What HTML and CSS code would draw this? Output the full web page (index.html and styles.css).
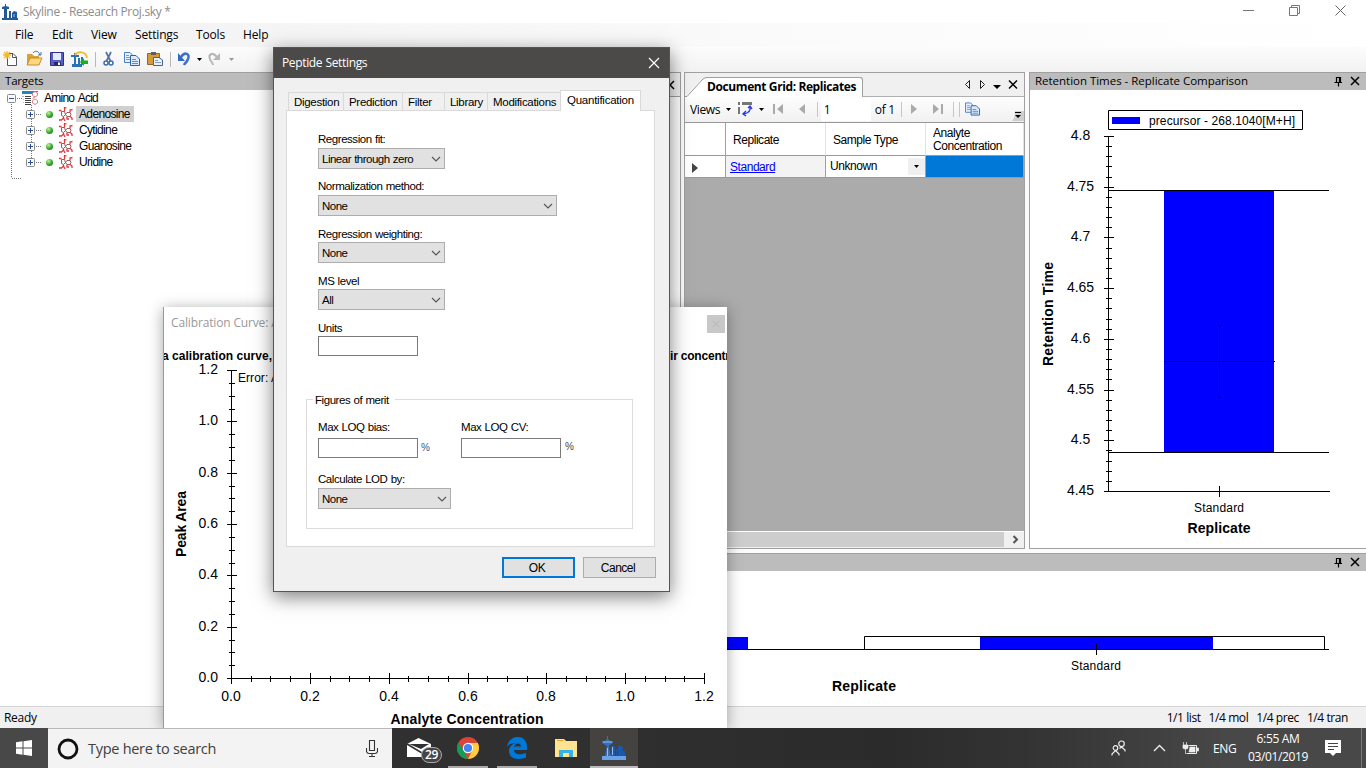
FILE: index.html
```
<!DOCTYPE html>
<html lang="en">
<head>
    <meta charset="UTF-8">
    <meta name="viewport" content="width=device-width, initial-scale=1.0">
    <title>Skyline - Research Proj.sky</title>
    <link rel="stylesheet" href="styles.css">
</head>
<body>
    <!-- shared icons -->
    <svg class="sprite" width="0" height="0">
        <symbol id="pin" viewBox="0 0 9 11"><path d="M2.5 6V1.5H6.5V6M5.5 1.5V6M0.5 6.5H8M4.5 7V10.5" fill="none" stroke="#000" stroke-width="1.2"/></symbol>
        <symbol id="close" viewBox="0 0 10 10"><path d="M1 1L9 9M9 1L1 9" fill="none" stroke="currentColor" stroke-width="1.5"/></symbol>
        <symbol id="chevron" viewBox="0 0 10 6"><path d="M1 1L5 5L9 1" fill="none" stroke="#555" stroke-width="1.1"/></symbol>
        <symbol id="plus" viewBox="0 0 9 9"><rect x=".5" y=".5" width="8" height="8" rx="1" fill="#fafafa" stroke="#8a8a8a"/><path d="M2 4.500H7M4.500 2V7" stroke="#2c4da0"/></symbol>
        <symbol id="copy" viewBox="0 0 16 14">
            <path d="M.5 .5H6L8.5 3V10.500H.5Z" fill="#eaf2fd" stroke="#4a7fc5"/>
            <path d="M2 3.500H5M2 5.500H6M2 7.500H6" stroke="#6a9bd8"/>
            <path d="M6.500 3.500H12L15.500 7V13.500H6.500Z" fill="#dceafb" stroke="#2d62ad"/>
            <path d="M8 7.500H12M8 9.500H14M8 11.500H14" stroke="#5b8fd4"/>
        </symbol>
        <symbol id="molecule" viewBox="0 0 14 15">
            <path d="M2.500 4.500H5.500L6.500 7.500L4.500 9.500L2.500 8.500ZM6.500 7.500L8 5.500H11L12 7.500L11 9.500H8Z" fill="none" stroke="#8a4b4d" stroke-width=".9"/>
            <path d="M0 3.500H2.500M5.500 4.500V0M5 .8H7.500M11 5.500V3L13.500 2.500M11 9.500L13 11V13M8 9.500V12H10M4.500 9.500V11L2.500 13H0M4.500 11L6 14" fill="none" stroke="#e2383d" stroke-width="1.300"/>
        </symbol>
        <symbol id="city" viewBox="0 0 26 26">
            <path d="M1 21H4L6 19L10 21H25V25H1Z" fill="#6aa2ec"/>
            <path d="M6 1H7V4L9 6H12V8L9 10H8V13L10 21H4L5.500 13V10H4L1 8V6H4L6 4Z" fill="#356fb8"/>
            <path d="M10 11H14V21H10ZM15 14H16V21H15ZM17 12L19 10L22 12V21H17ZM22 16H24V21H22Z" fill="#1d57a5"/>
            <path d="M6.500 13V21M11.500 12V20M2 7H11" stroke="#8fbcf2"/>
        </symbol>
    </svg>

    <div class="app">
        <header class="titlebar">
            <svg class="app-icon" viewBox="0 0 16 16"><path d="M0 14H16V16H0ZM3 0H4V2L7 3V5H5V14H2V5H0V3L3 2ZM7 7H9V14H7ZM10 9L12 7L15 8V14H10Z" fill="#215b9c"/><path d="M12 10V13" stroke="#9cc0ea"/></svg>
            <span class="app-title">Skyline - Research Proj.sky *</span>
            <div class="window-controls">
                <svg width="11" height="11"><path d="M0 5.500H11" stroke="#777"/></svg>
                <svg width="11" height="11"><path d="M2.500 2.500V.5H10.500V8.500H8.500M.5 2.500H8.500V10.500H.5Z" fill="none" stroke="#777"/></svg>
                <svg width="11" height="11"><path d="M.5 .5L10.500 10.500M10.500 .5L.5 10.500" stroke="#666"/></svg>
            </div>
        </header>

        <nav class="menubar">
            <span class="m-file">File</span><span class="m-edit">Edit</span><span class="m-view">View</span><span class="m-settings">Settings</span><span class="m-tools">Tools</span><span>Help</span>
        </nav>

        <div class="toolbar">
            <svg width="240" height="25" viewBox="0 47 240 25">
                <!-- new -->
                <path d="M7.500 53.500H13L16.500 57V65.500H7.500Z" fill="#fff" stroke="#53555d"/><path d="M12.500 53.500V57.500H16.500" fill="none" stroke="#53555d"/>
                <path d="M7 51V59M3 55H11M4 52L10 58M10 52L4 58" stroke="#f3ba28" stroke-width="1.300"/>
                <!-- open -->
                <path d="M27 65V54H32L34 56H39V65Z" fill="#dfa137"/><path d="M27 65L30 58H42L39 65Z" fill="#ffd77a" stroke="#b47b22" stroke-width=".8"/><path d="M33 53C35 50 39 51 40 55M41 52V55H38" fill="none" stroke="#4a6fa8"/>
                <!-- save -->
                <path d="M50.500 52.500H63.500V65.500H50.500Z" fill="#5560c5" stroke="#30308a"/><path d="M53 53H61V60H53Z" fill="#e4e9ff"/><path d="M54 62H61V65H54Z" fill="#26266f"/><path d="M58 62.500H60V65H58Z" fill="#fff"/>
                <!-- publish -->
                <path d="M72 64H82V67H72ZM74 53H76V55H79V57H76V65H74V57H71V55H74ZM78 58H80V65H78ZM81 57H83V65H81Z" fill="#2a72b8"/><path d="M75 55C78 51 86 51 87 58" fill="none" stroke="#f1bc3b" stroke-width="2"/><path d="M80 62L84 58V60.500H88V64H84V66Z" fill="#15b21c"/>
                <path d="M95.500 52V67M170.500 52V67" stroke="#b9b9b9"/>
                <!-- cut -->
                <path d="M106 52L110.500 61M111 52L106.500 61" stroke="#58739b" stroke-width="1.700"/><circle cx="106" cy="63" r="2" fill="#fff" stroke="#3d6bb3" stroke-width="1.500"/><circle cx="111" cy="63" r="2" fill="#fff" stroke="#3d6bb3" stroke-width="1.500"/>
                <use href="#copy" x="124" y="52" width="16" height="14"/>
                <!-- paste -->
                <path d="M147.500 53.500H159.500V64.500H147.500Z" fill="#d39b3c" stroke="#946622"/><path d="M151 52H156V55H151Z" fill="#5d5d62"/><path d="M153.500 57.500H159L162.500 60V65.500H153.500Z" fill="#eaf2ff" stroke="#49618e"/><path d="M155 60.500H158M155 62.500H161" stroke="#7d9acb"/>
                <!-- undo, redo -->
                <path d="M181 57C185 51 190 54 188 59C187 62 185 63 184 65" fill="none" stroke="#3f71c6" stroke-width="2.500"/><path d="M178 53V61H185Z" fill="#3568c0"/><path d="M197 58H202L199.500 61Z"/>
                <path d="M217 57C212 51 208 55 210 59C211 62 213 63 213 65" fill="none" stroke="#b8b8b8" stroke-width="2"/><path d="M220 53V60H213Z" fill="#b8b8b8"/><path d="M229 58H234L231.500 61Z" fill="#999"/>
            </svg>
        </div>

        <main class="workspace">
            <section class="targets">
                <h2 class="pane-title">Targets</h2>
                <div class="tree">
                    <svg class="tree-lines" width="60" height="98" viewBox="0 90 60 98"><path d="M11.500 104V178M12 178.500H22M31.500 105V162M17 98.500H22M36 114.500H41M36 130.500H41M36 146.500H41M36 162.500H41" fill="none" stroke="#777" stroke-dasharray="1 1"/></svg>
                    <div class="node root">
                        <svg class="expander" viewBox="0 0 9 9"><rect x=".5" y=".5" width="8" height="8" rx="1" fill="#fafafa" stroke="#8a8a8a"/><path d="M2 4.500H7" stroke="#2c4da0"/></svg>
                        <svg class="list-icon" viewBox="0 0 16 16"><path d="M0 1H16V2H12L10 4H0Z" fill="#2786b8"/><path d="M3 6.500H9M3 8.500H9M3 10.500H9M3 12.500H9M3 14.500H9" stroke="#444"/><path d="M0 6.500H2M1 9.500H2M1 12.500H2" stroke="#bbb"/><path d="M10.500 3L13 1.500L15.500 3V5.500L13 7L10.500 5.500ZM13 7L10.500 8.500M10.500 10.500L13 9L15.500 10.500V13L13 14.500L10.500 13Z" fill="none" stroke="#e37d8a"/></svg>
                        <span>Amino Acid</span>
                    </div>
                    <div class="node selected"><svg class="expander"><use href="#plus"/></svg><i class="dot"></i><svg class="mol"><use href="#molecule"/></svg><span>Adenosine</span></div>
                    <div class="node"><svg class="expander"><use href="#plus"/></svg><i class="dot"></i><svg class="mol"><use href="#molecule"/></svg><span>Cytidine</span></div>
                    <div class="node"><svg class="expander"><use href="#plus"/></svg><i class="dot"></i><svg class="mol"><use href="#molecule"/></svg><span>Guanosine</span></div>
                    <div class="node"><svg class="expander"><use href="#plus"/></svg><i class="dot"></i><svg class="mol"><use href="#molecule"/></svg><span>Uridine</span></div>
                </div>
            </section>

            <div class="docks">
                <div class="top-docks">
                    <section class="chromatogram"><div class="strip"><svg width="10" height="10"><use href="#close"/></svg></div></section>

                    <section class="doc-grid">
                        <div class="tabstrip">
                            <svg class="tab-edge" width="22" height="24"><path d="M0 23.500C5 22 14 5 22 4.500V24H0Z" fill="#fff"/><path d="M0 23.500H2L18 6Q20 4.500 22 4.500" fill="none" stroke="#9a9a9a"/></svg>
                            <span class="doc-tab">Document Grid: Replicates</span>
                            <svg class="tab-tools" width="56" height="12"><path d="M5.500 1.500L1.500 5.500L5.500 9.500ZM16.500 1.500L20.500 5.500L16.500 9.500Z" fill="none" stroke="#222"/><path d="M29 6H37L33 10Z"/><path d="M45 1.500L53 9.500M53 1.500L45 9.500" stroke="#000" stroke-width="1.500"/></svg>
                        </div>
                        <div class="grid-tools">
                            <span class="views">Views</span>
                            <svg class="nav-icons" width="97" height="24" viewBox="724 97 97 24">
                                <path d="M726 108H731L728.500 111ZM759 108H764L761.500 111Z"/>
                                <path d="M738 102H740V105H738ZM742 102H752V105H742ZM738 107H740V114H738Z" fill="#777"/><path d="M750 107C751 111 748 113 744 114M748 108L750 106L752 109M746 111L743 114L746 116" fill="none" stroke="#2340e8" stroke-width="1.400"/>
                                <path d="M773 104H775V114H773ZM783 104V114L777 109ZM805 104V114L799 109Z" fill="#aaa"/>
                                <path d="M817.500 102V117" stroke="#c6c6c6"/>
                            </svg>
                            <input class="record" type="text" value="1">
                            <span class="of">of 1</span>
                            <svg width="124" height="24" viewBox="900 97 124 24">
                                <path d="M901.500 102V117M953.500 102V117M959.500 102V117" stroke="#c6c6c6"/>
                                <path d="M911 104V114L917 109ZM933 104V114L939 109ZM941 104H943V114H941Z" fill="#aaa"/>
                                <use href="#copy" x="965" y="102" width="15" height="14"/>
                                <path d="M1012 121Q1015 118 1015 111H1024V121Z" fill="#cfcfcf"/><path d="M1015 112.500H1021" stroke="#000"/><path d="M1015 115H1021L1018 118Z"/>
                            </svg>
                        </div>
                        <table class="replicates">
                            <tr class="head"><th class="row-mark"></th><th class="col">Replicate</th><th class="col">Sample Type</th><th class="wide">Analyte<br>Concentration</th></tr>
                            <tr><td class="mark"><svg width="6" height="10"><path d="M0 0L6 5L0 10Z" fill="#444"/></svg></td><td class="name"><a href="#">Standard</a></td><td class="type"><span>Unknown</span><b><svg width="5" height="3"><path d="M0 0H5L2.500 3Z"/></svg></b></td><td class="picked"></td></tr>
                        </table>
                        <div class="hscroll"><div class="thumb"></div><svg width="20" height="15"><path d="M9.500 4L13 7.500L9.500 11" fill="none" stroke="#555" stroke-width="2"/></svg></div>
                    </section>

                    <section class="retention">
                        <h2 class="pane-title"><span>Retention Times - Replicate Comparison</span><svg class="pin"><use href="#pin"/></svg><svg class="x"><use href="#close"/></svg></h2>
                        <svg class="chart" id="rtChart" width="336" height="458" viewBox="1030 90 336 458">
                            <path d="M1108.500 110.500H1302.500V129.500H1108.500Z" class="box"/>
                            <path d="M1112 117H1140V124H1112Z" class="bar"/>
                            <text x="1149" y="125" class="small" textLength="146">precursor - 268.1040[M+H]</text>
                            <path d="M1164 191H1274V452H1164Z" class="bar"/>
                            <path d="M1108 190.500H1329M1108 452.500H1329M1108.500 136V491.500H1330M1219.500 486V497" class="axis"/>
                            <path d="M1164 361.500H1275M1219.500 325V398M1217 325.500H1222M1217 397.500H1222" stroke="#000028"/>
                            <text x="1219" y="512" class="small mid" textLength="50">Standard</text>
                            <text x="1219" y="533" class="label mid" textLength="63">Replicate</text>
                            <text transform="translate(1053 314) rotate(-90)" class="label mid" textLength="104">Retention Time</text>
                        </svg>
                    </section>
                </div>

                <section class="areas">
                    <h2 class="pane-title"><span></span><svg class="pin"><use href="#pin"/></svg><svg class="x"><use href="#close"/></svg></h2>
                    <svg class="chart" width="686" height="135" viewBox="680 571 686 135">
                        <path d="M680 637H748V649H680ZM980 637H1213V649H980Z" class="bar"/>
                        <path d="M680 649.500H1329M864.500 649V636.500H1324.500V649M1096.500 644V655" class="axis"/>
                        <text x="1096" y="670" class="small mid" textLength="50">Standard</text>
                        <text x="864" y="691" class="label mid" textLength="64">Replicate</text>
                    </svg>
                </section>
            </div>
        </main>

        <footer class="statusbar"><span>Ready</span><span class="counts"><span>1/1 list</span><span>1/4 mol</span><span>1/4 prec</span><span>1/4 tran</span></span></footer>

        <div class="taskbar">
            <div class="start"><svg width="16" height="16"><path d="M0 2.300L6.500 1.300V7.500H0ZM7.500 1.200L16 0V7.500H7.500ZM0 8.500H6.500V14.700L0 13.700ZM7.500 8.500H16V16L7.500 14.800Z" fill="#fff"/></svg></div>
            <div class="search">
                <svg width="22" height="22"><circle cx="11" cy="11" r="9" fill="none" stroke="#111" stroke-width="2.800"/></svg>
                <span>Type here to search</span>
                <svg class="mic" width="12" height="17"><path d="M3.500 .5H8.500V10.500H3.500ZM.5 8V11.500Q1 13.500 3 13.500H9Q11 13.500 11.500 11.500V8M6 13.500V16M3 16.500H9" fill="none" stroke="#333" stroke-width="1.100"/></svg>
            </div>
            <div class="task mail"><svg width="51" height="40" viewBox="392 728 51 40"><path d="M407 744L418.500 738L431 744V757H407Z" fill="#fff"/><path d="M409 744H429L421 749Z" fill="#303030"/><path d="M407 744L422 753" stroke="#303030" stroke-width="1.500"/><rect x="421.500" y="747.500" width="20" height="15" rx="7.500" fill="#454545" stroke="#ababab"/></svg><span class="badge">29</span></div>
            <div class="task open"><svg width="22" height="22" viewBox="0 0 22 22"><circle cx="11" cy="11" r="11" fill="#db4437"/><path d="M1.500 5.500L7 14L11 22A11 11 0 0 1 1.500 5.500Z" fill="#0f9d58"/><path d="M11 6H20.800A11 11 0 0 1 11 22L15.500 13Z" fill="#ffcd40"/><circle cx="11" cy="11" r="5.200" fill="#fff"/><circle cx="11" cy="11" r="4.100" fill="#4285f4"/></svg></div>
            <div class="task open"><svg width="22" height="22" viewBox="0 0 22 22"><path d="M1 10C2 3 7 0 12 0C18 0 21 5 21 10V13H8C8 17 12 18.500 20 16V20.500C10 24 3 21 3 14C3 10 6 7 10 6C6 5.500 3 7 1 10ZM8 9.500H15C15 5.500 9 5.500 8 9.500Z" fill="#0078d7" fill-rule="evenodd"/></svg></div>
            <div class="task"><svg width="22" height="19" viewBox="0 0 22 19"><path d="M0 0H9L11 2H22V18H0Z" fill="#ffe391"/><path d="M2 1H8L9 2H2Z" fill="#e7a72c"/><path d="M4 18V11H18V18H14V14H8V18Z" fill="#35b3e7"/></svg></div>
            <div class="task open active"><svg width="26" height="26"><use href="#city"/></svg></div>
            <div class="tray">
                <svg class="people" width="16" height="17"><path d="M1 15.500V14L4.500 10.500L8 14V15.500M8.500 8.500L10.500 7L14 10V11.500" fill="none" stroke="#eee" stroke-width="1.200"/><circle cx="4.500" cy="8" r="2.300" fill="none" stroke="#eee" stroke-width="1.200"/><circle cx="10.500" cy="3.800" r="2.800" fill="none" stroke="#eee" stroke-width="1.200"/></svg>
                <svg class="up" width="13" height="8"><path d="M1 7L6.500 1.500L12 7" fill="none" stroke="#eee" stroke-width="1.300"/></svg>
                <svg class="battery" width="17" height="13"><path d="M6.500 3.500H14.500V11.500H4.500" fill="none" stroke="#eee"/><path d="M8 5H13V10H7ZM15 6H16.500V9H15ZM1 3H6V6Q6 7 3.500 7Q1 7 1 6ZM1.500 0V3M4.500 0V3M3.500 7V12" fill="#eee" stroke="#eee" stroke-width=".7"/></svg>
                <span class="lang">ENG</span>
                <div class="clock"><span>6:55 AM</span><span>03/01/2019</span></div>
                <svg class="notes" width="16" height="17"><path d="M0 0H16V13H11L8 16L5 13H0Z" fill="#fff"/><path d="M3 3.500H13M3 6.500H13M3 9.500H9" stroke="#444"/></svg>
                <div class="peek"></div>
            </div>
        </div>

        <!-- floating windows -->
        <section class="calibration">
            <div class="cal-title"><span>Calibration Curve: A</span><div class="cal-close"><svg width="8" height="8"><use href="#close"/></svg></div></div>
            <svg class="chart" id="calChart" width="563" height="390" viewBox="164 338 563 390">
                <text x="162" y="360" class="title" textLength="110">a calibration curve,</text>
                <text x="670" y="360" class="title" textLength="60">ir concentr</text>
                <text x="238" y="382" class="small" textLength="41">Error: A</text>
                <path d="M231.500 370V678.500H704" class="axis"/>
                <text transform="translate(186 524) rotate(-90)" class="label mid" textLength="66">Peak Area</text>
                <text x="467" y="724" class="label mid" textLength="153">Analyte Concentration</text>
            </svg>
        </section>

        <section class="dialog">
            <div class="dialog-title"><span>Peptide Settings</span><svg width="12" height="12"><path d="M1 1L11 11M11 1L1 11" stroke="#fff" stroke-width="1.200"/></svg></div>
            <div class="tabs">
                <span class="tab t1">Digestion</span><span class="tab t2">Prediction</span><span class="tab t3">Filter</span><span class="tab t4">Library</span><span class="tab t5">Modifications</span><span class="tab current">Quantification</span>
            </div>
            <div class="page">
                <div class="field"><label>Regression fit:</label><div class="combo">Linear through zero<svg><use href="#chevron"/></svg></div></div>
                <div class="field"><label>Normalization method:</label><div class="combo long">None<svg><use href="#chevron"/></svg></div></div>
                <div class="field low"><label>Regression weighting:</label><div class="combo">None<svg><use href="#chevron"/></svg></div></div>
                <div class="field low"><label>MS level</label><div class="combo">All<svg><use href="#chevron"/></svg></div></div>
                <div class="field low"><label>Units</label><input type="text"></div>
                <div class="merit">
                    <span class="legend">Figures of merit</span>
                    <div class="pair">
                        <div class="field"><label>Max LOQ bias:</label><div class="pct"><input type="text"><span>%</span></div></div>
                        <div class="field"><label>Max LOQ CV:</label><div class="pct"><input type="text"><span class="raised">%</span></div></div>
                    </div>
                    <div class="field"><label>Calculate LOD by:</label><div class="combo lod">None<svg><use href="#chevron"/></svg></div></div>
                </div>
            </div>
            <div class="buttons"><button class="ok">OK</button><button>Cancel</button></div>
        </section>
    </div>

    <script src="charts.js"></script>
</body>
</html>
```
FILE: styles.css
```
:root {
    --ui: "Open Sans", "Noto Sans", sans-serif;
    --sans: "Liberation Sans", Arial, sans-serif;
    --line: #a0a0a0;
}

* {
    box-sizing: border-box;
    margin: 0;
    padding: 0;
}

body {
    font: 12px var(--ui);
    color: #000;
    overflow: hidden;
}

svg {
    display: block;
    flex: none;
}

.sprite {
    position: absolute;
}

.app {
    position: relative;
    width: 1366px;
    height: 768px;
    overflow: hidden;
    display: flex;
    flex-direction: column;
    white-space: nowrap;
}

/* top bars */
.titlebar {
    height: 23px;
    background: #fff;
    display: flex;
    align-items: center;
    padding: 0 20px 2px 2px;
    color: #8b8b8b;
}

.app-icon {
    width: 16px;
    height: 16px;
    margin: 2px 5px 0 0;
}

.app-title {
    letter-spacing: -0.32px;
    padding-top: 1px;
}

.window-controls {
    display: flex;
    gap: 35px;
    margin-left: auto;
}

.menubar {
    height: 24px;
    background: linear-gradient(90deg, #f1f1f1, #f7f7f7 30%, #fff);
    display: flex;
    align-items: center;
    padding: 0 0 2px 15px;
    letter-spacing: -0.15px;
}

.m-file { width: 37px; }
.m-edit { width: 39px; }
.m-view { width: 44px; }
.m-settings { width: 61px; }
.m-tools { width: 47px; }

.toolbar {
    height: 25px;
    background: linear-gradient(#fcfcfc, #f2f2f2);
}

/* docking area */
.workspace {
    height: 634px;
    background: #fcfafa;
    display: flex;
    gap: 4px;
}

.pane-title {
    height: 18px;
    background: #bcbcbc;
    border-top: 1px solid var(--line);
    font-size: 11.5px;
    font-weight: normal;
    line-height: 15px;
    letter-spacing: -0.02px;
    padding: 0 6px 1px 5px;
    display: flex;
    align-items: center;
}

.pane-title span {
    margin-top: -2px;
}

.pane-title .pin {
    width: 9px;
    height: 11px;
    margin-left: auto;
    margin-right: 7px;
}

.pane-title .x {
    width: 10px;
    height: 10px;
}

.targets {
    width: 276px;
    background: #fff;
    font-family: var(--sans);
}

.targets .pane-title {
    font-family: var(--ui);
    letter-spacing: -0.2px;
    line-height: 13px;
    padding-bottom: 2px;
}

.tree {
    position: relative;
    letter-spacing: -0.65px;
}

.tree-lines {
    position: absolute;
    left: 0;
    top: 0;
}

.node {
    height: 16px;
    display: flex;
    align-items: center;
    padding-left: 26px;
}

.node.root {
    padding-left: 7px;
}

.expander {
    width: 9px;
    height: 9px;
    position: relative;
}

.list-icon {
    width: 16px;
    height: 16px;
    margin: 0 4px 0 6px;
}

.dot {
    width: 7px;
    height: 7px;
    border-radius: 50%;
    margin: 0 6px 0 11px;
    background: radial-gradient(circle at 35% 30%, #b6f79e, #37a32c 55%, #1e5e19);
}

.mol {
    width: 14px;
    height: 15px;
    margin: 0 3px 0 0;
}

.node span {
    padding: 0 4px 0 3px;
    line-height: 16px;
}

.node.root span {
    padding: 0 2px;
    letter-spacing: -0.75px;
    word-spacing: 1.5px;
}

.selected span {
    background: #d0d0d0;
}

.docks {
    width: 1086px;
    display: flex;
    flex-direction: column;
    gap: 4px;
}

.top-docks {
    height: 477px;
    display: flex;
    gap: 4px;
}

.chromatogram {
    width: 401px;
    background: #fff;
    border: 1px solid var(--line);
}

.strip {
    height: 24px;
    background: #f0f0f0;
    border-bottom: 1px solid var(--line);
    padding: 7px 5px;
    display: flex;
    justify-content: flex-end;
}

/* document grid */
.doc-grid {
    width: 341px;
    margin-left: -1px;
    border: 1px solid var(--line);
    background: #ababab;
    display: flex;
    flex-direction: column;
}

.tabstrip {
    height: 24px;
    background: linear-gradient(transparent 23px, #b0b0b0 23px), #f0f0f0;
    display: flex;
    align-items: center;
}

.doc-tab {
    width: 156px;
    height: 20px;
    margin-top: 4px;
    background: #fff;
    border-top: 1px solid var(--line);
    border-right: 1px solid var(--line);
    border-radius: 0 3px 0 0;
    font-weight: bold;
    font-size: 12px;
    line-height: 18px;
    letter-spacing: -0.4px;
}

.tab-tools {
    margin: 0 4px 0 auto;
}

.grid-tools {
    height: 25px;
    background: linear-gradient(#fdfdfd, #f1f1f1);
    display: flex;
    align-items: center;
    padding: 0 0 1px 5px;
}

.views {
    width: 35px;
    letter-spacing: -0.35px;
}

.record {
    width: 50px;
    height: 23px;
    border: 0;
    background: #fff;
    padding-left: 3px;
    font: 12px var(--ui);
}

.of {
    width: 26px;
    margin-left: 4px;
    letter-spacing: -0.3px;
}

.replicates {
    width: 339px;
    border-collapse: separate;
    border-spacing: 0;
    table-layout: fixed;
    font: 12px/13px var(--sans);
    letter-spacing: -0.45px;
    background: #fff;
    border-top: 1px solid #999;
}

.replicates th,
.replicates td {
    border-right: 1px solid var(--line);
    border-bottom: 1px solid #999;
    font-weight: normal;
    text-align: left;
    padding: 2px 7px 0;
}

.replicates th {
    height: 33px;
    border-right-color: #e3e3e3;
}

.replicates .row-mark {
    width: 41px;
    border-right-color: var(--line);
}

.replicates .col {
    width: 100px;
}

.replicates td {
    height: 22px;
}

.replicates .name {
    background: #f3f3f3;
    padding-left: 4px;
}

.name a {
    color: #00f;
}

.replicates .type {
    padding: 0 0 0 4px;
}

.type span {
    display: inline-block;
    width: 78px;
    padding-top: 1px;
}

.type b {
    display: inline-flex;
    width: 17px;
    height: 17px;
    align-items: center;
    justify-content: center;
    background: #f0f0f0;
    vertical-align: middle;
}

.replicates .picked {
    background: #0078d7;
}

.hscroll {
    height: 17px;
    margin-top: auto;
    background: #f0f0f0;
    border-top: 1px solid #fff;
    display: flex;
}

.thumb {
    width: 319px;
    height: 15px;
    background: #cdcdcd;
}

/* charts */
.retention {
    width: 337px;
    background: #fff;
    border-left: 1px solid var(--line);
    border-bottom: 1px solid var(--line);
}

.areas {
    height: 153px;
    background: #fff;
}

.areas .chart {
    margin-left: auto;
}

.chart {
    font-family: var(--sans);
}

.axis,
.box {
    fill: none;
    stroke: #000;
}

.bar {
    fill: #00f;
}

.mid {
    text-anchor: middle;
}

.small {
    font-size: 12px;
}

.label {
    font-size: 14px;
    font-weight: bold;
}

.title {
    font-size: 12px;
    font-weight: bold;
}

.tick-text {
    font-size: 14px;
}

/* status and task bars */
.statusbar {
    height: 22px;
    background: #f0f0f0;
    border-top: 1px solid #d4d4d4;
    display: flex;
    align-items: center;
    justify-content: space-between;
    padding: 0 18px 0 4px;
    font-size: 12px;
    letter-spacing: -0.3px;
}

.counts {
    display: flex;
    gap: 8px;
    letter-spacing: -0.42px;
}

.taskbar {
    height: 40px;
    background: linear-gradient(90deg, #303030 40%, #2b2b2b 65%, #333 75%, #484848 90%);
    display: flex;
}

.start {
    width: 48px;
    background: #484848;
    display: flex;
    align-items: center;
    justify-content: center;
}

.search {
    width: 344px;
    background: #f3f3f3;
    border-top: 1px solid #b8b8b8;
    display: flex;
    align-items: center;
    padding: 0 14px 0 9px;
    color: #404040;
    font-size: 14.5px;
}

.search span {
    margin-left: 9px;
    letter-spacing: -0.28px;
}

.mic {
    margin-left: auto;
}

.task {
    width: 49px;
    display: flex;
    align-items: center;
    justify-content: center;
    position: relative;
}

.mail {
    width: 51px;
}

.badge {
    position: absolute;
    left: 33px;
    top: 18px;
    color: #fff;
    font-size: 12px;
    font-weight: 600;
    letter-spacing: -0.3px;
}

.open::after {
    content: "";
    position: absolute;
    left: 5px;
    right: 4px;
    bottom: 0;
    height: 2px;
    background: #aaa;
}

.active {
    width: 48px;
    background: #454340;
}

.active::after {
    left: 0;
    right: 0;
    background: #bbb;
}

.tray {
    margin-left: auto;
    width: 255px;
    display: flex;
    align-items: center;
    color: #fff;
    letter-spacing: -0.35px;
}

.up { margin-left: 26px; }
.battery { margin-left: 16px; }

.lang {
    width: 24px;
    margin-left: 14px;
}

.clock {
    width: 60px;
    margin-left: 11px;
    display: flex;
    flex-direction: column;
    align-items: center;
    line-height: 18px;
}

.notes {
    margin-left: 17px;
}

.peek {
    width: 1px;
    height: 40px;
    margin: 0 4px 0 auto;
    background: #777;
}

/* calibration window */
.calibration {
    position: absolute;
    left: 163px;
    top: 307px;
    width: 564px;
    height: 421px;
    overflow: hidden;
    background: #fff;
    border-left: 1px solid #999;
    clip-path: inset(-18px -18px 0 -18px);
    box-shadow: 0 2px 14px rgba(0, 0, 0, 0.35);
}

.cal-title {
    height: 31px;
    display: flex;
    align-items: center;
    justify-content: space-between;
    padding: 0 2px 0 7px;
    color: #999;
    letter-spacing: -0.15px;
}

.cal-close {
    width: 18px;
    height: 18px;
    background: #c8c8c8;
    color: #bcbcbc;
    display: flex;
    align-items: center;
    justify-content: center;
    margin-top: 3px;
}

/* peptide settings */
.dialog {
    position: absolute;
    left: 273px;
    top: 47px;
    width: 397px;
    height: 545px;
    background: #f0f0f0;
    border: 1px solid #555;
    box-shadow: 0 5px 18px rgba(0, 0, 0, 0.5);
    font: 11.5px var(--sans);
    letter-spacing: -0.45px;
    word-spacing: 0.5px;
}

.dialog-title {
    height: 30px;
    background: #4c4a48;
    color: #fff;
    font: 12px var(--ui);
    letter-spacing: -0.35px;
    display: flex;
    align-items: center;
    justify-content: space-between;
    padding: 0 9px 1px 8px;
}

.tabs {
    height: 32px;
    display: flex;
    align-items: flex-end;
    padding-left: 14px;
    letter-spacing: -0.3px;
}

.tab {
    height: 18px;
    border: 1px solid #d9d9d9;
    border-width: 1px 0 0 1px;
    line-height: 18px;
    padding-left: 5px;
}

.t1 { width: 55px; }
.t2 { width: 59px; }
.t3 { width: 42px; }
.t4 { width: 43px; }
.t5 { width: 73px; }

.tab.current {
    position: relative;
    width: 81px;
    height: 21px;
    margin-bottom: -1px;
    border-right-width: 1px;
    padding-left: 6px;
    background: #fff;
    letter-spacing: -0.25px;
}

.page {
    width: 369px;
    height: 437px;
    margin-left: 12px;
    padding: 20px 0 0 31px;
    background: #fff;
    border: 1px solid #d9d9d9;
}

.field {
    height: 47px;
}

.field label {
    display: block;
    height: 17px;
    line-height: 17px;
}

.field.low label {
    line-height: 19px;
}

.combo {
    width: 127px;
    height: 21px;
    border: 1px solid #adadad;
    background: #e1e1e1;
    padding: 0 3px;
    display: flex;
    align-items: center;
    justify-content: space-between;
    letter-spacing: -0.5px;
}

.combo svg {
    width: 10px;
    height: 6px;
}

.combo.long { width: 239px; }
.combo.lod { width: 133px; }

.field input {
    display: block;
    width: 100px;
    height: 20px;
    border: 1px solid #7a7a7a;
    background: #fff;
}

.merit {
    width: 327px;
    height: 130px;
    margin: 33px 0 0 -12px;
    border: 1px solid #dcdcdc;
    padding-left: 11px;
}

.legend {
    display: block;
    width: 82px;
    height: 16px;
    margin: -7px 0 10px -5px;
    padding-left: 2px;
    line-height: 15px;
    background: #fff;
}

.pair {
    display: flex;
    gap: 26px;
    margin-bottom: 5px;
}

.pair .field label {
    height: 19px;
}

.pct {
    display: flex;
    gap: 3px;
    line-height: 20px;
    color: #35558c;
    font-size: 10px;
}

.pct span {
    width: 14px;
}

.pct .raised {
    line-height: 18px;
    padding-left: 1px;
    color: #444;
}

.buttons {
    display: flex;
    justify-content: flex-end;
    gap: 8px;
    margin: 10px 13px 0 0;
}

.buttons button {
    width: 73px;
    height: 21px;
    padding-right: 3px;
    border: 1px solid #adadad;
    background: #e1e1e1;
    font: 12px var(--sans);
    letter-spacing: -0.5px;
}

.buttons .ok {
    border: 2px solid #0078d7;
}
```
FILE: charts.js
```
const NS = 'http://www.w3.org/2000/svg';

function add(svg, tag, attrs, text) {
    const el = document.createElementNS(NS, tag);
    Object.keys(attrs).forEach(k => el.setAttribute(k, attrs[k]));
    if (text) el.textContent = text;
    svg.appendChild(el);
}

// vertical scale: labels from bottom to top
function yAxis(svg, x, bottom, top, minor, labels, labelX, anchor) {
    const steps = (labels.length - 1) * minor;
    let d = '';
    for (let i = 0; i <= steps; i++) {
        const y = Math.floor(bottom - (bottom - top) * i / steps) + 0.5;
        const major = i % minor === 0;
        d += `M${x - (major ? 4.5 : 2.5)} ${y}H${x + (major ? 5.5 : 3.5)}`;
        if (major) {
            add(svg, 'text', { x: labelX, y: y + 3.5, 'text-anchor': anchor, class: 'tick-text' }, labels[i / minor]);
        }
    }
    add(svg, 'path', { d: d, class: 'axis' });
}

function xAxis(svg, y, left, right, minor, labels) {
    const steps = (labels.length - 1) * minor;
    let d = '';
    for (let i = 0; i <= steps; i++) {
        const x = Math.floor(left + (right - left) * i / steps) + 0.5;
        const major = i % minor === 0;
        d += `M${x} ${y - (major ? 5.5 : 2.5)}V${y + (major ? 5.5 : 3.5)}`;
        if (major) {
            add(svg, 'text', { x: x - 0.5, y: 701, 'text-anchor': 'middle', class: 'tick-text' }, labels[i / minor]);
        }
    }
    add(svg, 'path', { d: d, class: 'axis' });
}

const scale = ['0.0', '0.2', '0.4', '0.6', '0.8', '1.0', '1.2'];

yAxis(document.getElementById('rtChart'), 1108.5, 491.5, 136.5, 5,
    ['4.45', '4.5', '4.55', '4.6', '4.65', '4.7', '4.75', '4.8'], 1080.5, 'middle');
yAxis(document.getElementById('calChart'), 231.5, 678.5, 370.5, 4, scale, 218, 'end');
xAxis(document.getElementById('calChart'), 678.5, 231.5, 704.5, 4, scale);
```
